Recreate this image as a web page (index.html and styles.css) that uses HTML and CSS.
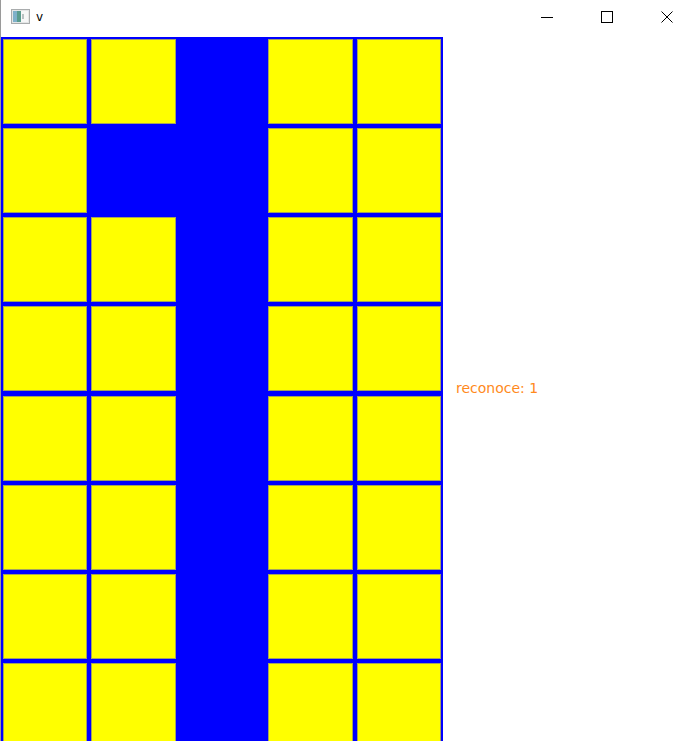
FILE: index.html
```html
<!DOCTYPE html>
<html lang="en">
<head>
	<meta charset="UTF-8">
	<title>v</title>
	<link rel="stylesheet" href="styles.css">
</head>
<body>
	<div id="win">
		<div class="titlebar">
			<svg class="app-icon" width="19" height="15" viewBox="0 0 19 15">
				<rect x="0.5" y="0.5" width="18" height="14" fill="#e4e6e6" stroke="#a9acad"/>
				<rect x="2" y="2" width="8" height="11" fill="#5a9c8e"/>
				<rect x="2" y="2" width="4" height="11" fill="#7fb1c9"/>
				<rect x="10" y="2" width="7" height="11" fill="#f6f7f7"/>
				<rect x="11" y="5" width="2" height="5" fill="#b9c2c2"/>
			</svg>
			<span class="title">v</span>
			<div class="controls">
				<svg width="12" height="12" viewBox="0 0 12 12"><path d="M0 6.5h12" stroke="#000" stroke-width="1"/></svg>
				<svg width="12" height="12" viewBox="0 0 12 12"><rect x="0.5" y="0.5" width="11" height="11" fill="none" stroke="#000"/></svg>
				<svg width="12" height="12" viewBox="0 0 12 12"><path d="M0.5 0.5l11 11M11.5 0.5l-11 11" stroke="#000" stroke-width="1"/></svg>
			</div>
		</div>
		<div class="client">
			<div class="board" id="board"></div>
			<p class="label">reconoce: 1</p>
		</div>
	</div>
	<script type="text/javascript">
		var oBoard = document.getElementById('board');
		//1 = casilla amarilla, 0 = vacia
		var arrMap = [
			[1, 1, 0, 1, 1],
			[1, 0, 0, 1, 1],
			[1, 1, 0, 1, 1],
			[1, 1, 0, 1, 1],
			[1, 1, 0, 1, 1],
			[1, 1, 0, 1, 1],
			[1, 1, 0, 1, 1],
			[1, 1, 0, 1, 1]
		];

		for (var i=0; i<arrMap.length; i++) {
			for (var j=0; j<arrMap[i].length; j++) {
				oBoard.innerHTML += '<div class="cell' + (arrMap[i][j] ? ' on' : '') + '"></div>';
			}
		}
	</script>
</body>
</html>
```

FILE: styles.css
```css
* {
	margin: 0;
	padding: 0;
}
html, body {
	height: 100%;
	overflow: hidden;
}
body {
	background: #fff;
	font-family: "DejaVu Sans", sans-serif;
}
#win {
	height: 100%;
	border-left: 1px solid #9a9a9a;
}
.titlebar {
	height: 34px;
	display: flex;
	align-items: center;
}
.app-icon {
	margin-left: 10px;
	margin-top: -2px;
}
.title {
	margin-left: 6px;
	font-size: 12px;
	color: #000;
	line-height: 14px;
}
.controls {
	margin-left: auto;
	margin-right: 19px;
	display: flex;
	gap: 48px;
}
.controls svg {
	display: block;
}
.client {
	display: flex;
	align-items: flex-start;
	padding-top: 3px;
}
.board {
	width: 442px;
	padding: 2px;
	box-sizing: border-box;
	background: #0000ff;
	display: grid;
	grid-template-columns: repeat(5, 1fr);
	grid-template-rows: repeat(8, 85px);
	column-gap: 4px;
	row-gap: 4.14px;
}
.cell.on {
	background: #ffff00;
	box-shadow: inset 0 0 0 1px #a3a35e;
}
.label {
	margin-top: 343px;
	margin-left: 13px;
	font-size: 14px;
	line-height: 16px;
	color: #ff8a1c;
}
```
